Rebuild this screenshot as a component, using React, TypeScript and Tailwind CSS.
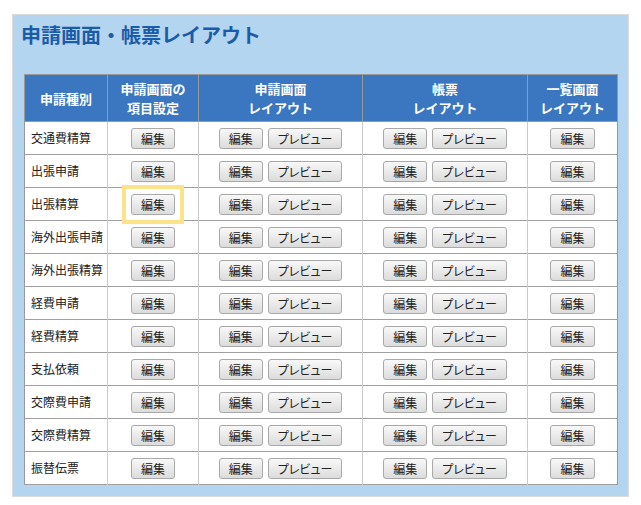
const rows = [
  "交通費精算",
  "出張申請",
  "出張精算",
  "海外出張申請",
  "海外出張精算",
  "経費申請",
  "経費精算",
  "支払依頼",
  "交際費申請",
  "交際費精算",
  "振替伝票",
];

function Btn({ label }: { label: string }) {
  return (
    <button className="h-[21px] rounded-[3px] border border-[#a9a9a9] bg-gradient-to-b from-[#f8f8f8] to-[#dcdcdc] px-[9px] text-[12px] leading-[19px] text-[#222] [font-feature-settings:'palt']">
      {label}
    </button>
  );
}

export default function App() {
  return (
    <div
      className="pl-[12px] pt-[14px]"
      style={{ fontFamily: '"Noto Sans CJK JP", "Noto Sans", sans-serif' }}
    >
      <div className="w-[617px] h-[483px] bg-[#b4d5f0] border border-[#dcdcdc] px-[11px] pt-[6px]">
        <h1 className="-ml-[3px] text-[20px] font-bold leading-[28px] text-[#1b5ca8]">
          申請画面・帳票レイアウト
        </h1>
        <table className="mt-[25px] w-[593px] table-fixed border-collapse border border-[#999] bg-white text-[12px] text-[#222]">
          <thead>
            <tr className="h-[47px] bg-[#3a77c0] text-[13px] text-white font-bold leading-[19px]">
              <th className="w-[83px] border border-[#999] font-bold">申請種別</th>
              <th className="w-[91px] border border-[#999] font-bold">
                申請画面の
                <br />
                項目設定
              </th>
              <th className="w-[164px] border border-[#999] font-bold">
                申請画面
                <br />
                レイアウト
              </th>
              <th className="w-[165px] border border-[#999] font-bold">
                帳票
                <br />
                レイアウト
              </th>
              <th className="w-[90px] border border-[#999] font-bold">
                一覧画面
                <br />
                レイアウト
              </th>
            </tr>
          </thead>
          <tbody>
            {rows.map((r, i) => (
              <tr key={r} className="h-[33px] border-b border-[#a0a0a0]">
                <td className="border-r border-[#cccccc] pl-[6px] text-left whitespace-nowrap">{r}</td>
                <td className="border-r border-[#cccccc]">
                  <div className="flex justify-center">
                    {i === 2 ? (
                      <div className="border-[4px] border-[#fce38a] p-[5px] -m-[9px]">
                        <Btn label="編集" />
                      </div>
                    ) : (
                      <Btn label="編集" />
                    )}
                  </div>
                </td>
                <td className="border-r border-[#cccccc]">
                  <div className="flex justify-center gap-[5px]">
                    <Btn label="編集" />
                    <Btn label="プレビュー" />
                  </div>
                </td>
                <td className="border-r border-[#cccccc]">
                  <div className="flex justify-center gap-[5px]">
                    <Btn label="編集" />
                    <Btn label="プレビュー" />
                  </div>
                </td>
                <td>
                  <div className="flex justify-center">
                    <Btn label="編集" />
                  </div>
                </td>
              </tr>
            ))}
          </tbody>
        </table>
      </div>
    </div>
  );
}
